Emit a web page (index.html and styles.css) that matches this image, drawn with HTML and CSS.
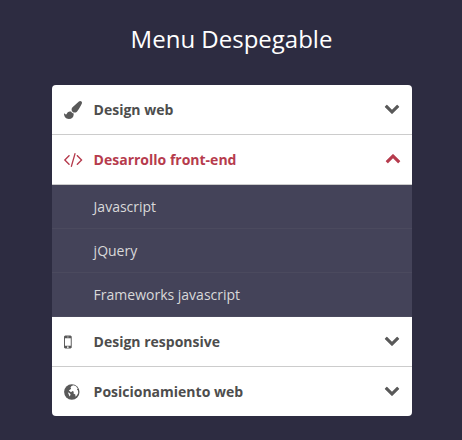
FILE: index.html
```html
<!DOCTYPE html>
<html lang="es">
<head>
<meta charset="utf-8">
<title>Menu Despegable</title>
<link rel="stylesheet" href="styles.css">
</head>
<body>
<h1>Menu Despegable</h1>
<svg class="defs" width="0" height="0"><defs>
<symbol id="chevron" viewBox="0 0 1792 1792"><path d="M1683 808l-742 741q-19 19-45 19t-45-19l-742-741q-19-19-19-45.500t19-45.500l166-165q19-19 45-19t45 19l531 531 531-531q19-19 45-19t45 19l166 165q19 19 19 45.500t-19 45.500z"/></symbol>
</defs></svg>
<ul class="accordion">
  <li>
    <div class="link"><span class="icon"><svg width="18" height="18" viewBox="0 0 1792 1792"><path d="M1615 0q70 0 122.500 46.500t52.500 116.500q0 63-45 151-332 629-465 752-97 91-218 91-126 0-216.500-92.500t-90.500-219.500q0-128 92-212l638-579q59-54 130-54zm-909 1034q39 76 106.500 130t150.500 76l1 71q4 213-129.500 347t-348.500 134q-123 0-218-46.500t-152.500-127.500-86.500-183-29-220q7 5 41 30t62 44.500 59 36.500 46 17q41 0 55-37 25-66 57.500-112.500t69.500-76 88-47.500 103-25.500 125-10.500z"/></svg></span><span class="label">Design web</span><svg class="chevron" width="16" height="16"><use href="#chevron"/></svg></div>
  </li>
  <li class="open">
    <div class="link"><span class="icon"><svg width="19" height="18" viewBox="-19 64 1891 1792"><path d="M553 1399l-50 50q-10 10-23 10t-23-10l-466-466q-10-10-10-23t10-23l466-466q10-10 23-10t23 10l50 50q10 10 10 23t-10 23l-393 393 393 393q10 10 10 23t-10 23zm591-1067l-373 1291q-4 13-15.500 19.500t-23.500 2.500l-62-17q-13-4-19.500-15.500t-2.500-24.500l373-1291q4-13 15.500-19.500t23.500-2.500l62 17q13 4 19.500 15.500t2.500 24.500zm657 651l-466 466q-10 10-23 10t-23-10l-50-50q-10-10-10-23t10-23l393-393-393-393q-10-10-10-23t10-23l50-50q10-10 23-10t23 10l466 466q10 10 10 23t-10 23z"/></svg></span><span class="label">Desarrollo front-end</span><svg class="chevron" width="16" height="16"><use href="#chevron"/></svg></div>
    <ul class="submenu">
      <li>Javascript</li>
      <li>jQuery</li>
      <li>Frameworks javascript</li>
    </ul>
  </li>
  <li>
    <div class="link"><span class="icon"><svg width="8" height="18" viewBox="512 0 796 1792"><path d="M976 1408q0-33-23.500-56.500t-56.500-23.500-56.500 23.500-23.500 56.500 23.500 56.500 56.500 23.500 56.500-23.500 23.500-56.500zm208-160v-704q0-13-9.500-22.500t-22.500-9.500h-512q-13 0-22.500 9.500t-9.500 22.500v704q0 13 9.500 22.500t22.500 9.500h512q13 0 22.500-9.500t9.500-22.500zm-192-848q0-16-16-16h-160q-16 0-16 16t16 16h160q16 0 16-16zm288-16v1024q0 52-38 90t-90 38h-512q-52 0-90-38t-38-90v-1024q0-52 38-90t90-38h512q52 0 90 38t38 90z"/></svg></span><span class="label">Design responsive</span><svg class="chevron" width="16" height="16"><use href="#chevron"/></svg></div>
  </li>
  <li>
    <div class="link"><span class="icon"><svg width="16" height="18" viewBox="0 0 16 18"><circle cx="7.800" cy="9" r="7.700"/><path class="land" d="M7.500 3L9.500 2.300l2.500 1 1.800 2.500-1 .8 1.200.9.200 2.500-1.200 2.300-1.500 1.500-.2-2.300-1.800-1L9.800 8.800 8.500 8 7 9.200 5.800 8.200 4.800 7.500 7.200 5.800 6.500 4.500zM3.800 9.200l2.200 1.300.6 1.300-1 1.700z"/></svg></span><span class="label">Posicionamiento web</span><svg class="chevron" width="16" height="16"><use href="#chevron"/></svg></div>
  </li>
</ul>
</body>
</html>
```
FILE: styles.css
```css
* {
  margin: 0;
  padding: 0;
  box-sizing: border-box;
}
body {
  background: #2d2c41;
  font-family: "Open Sans", sans-serif;
  padding-top: 22px;
}
h1 {
  padding-left: 1px;
  color: #fff;
  font-size: 24px;
  font-weight: 400;
  line-height: 33px;
  text-align: center;
}
ul {
  list-style: none;
}
.defs {
  display: block;
}
.accordion {
  width: 360px;
  margin: 30px auto 0 52px;
  background: #fff;
  border-radius: 4px;
  overflow: hidden;
}
.link {
  display: flex;
  align-items: center;
  height: 50px;
  padding: 0 12px 0 11.6px;
  border-bottom: 1px solid #ccc;
  color: #4d4d4d;
  font-size: 14px;
  font-weight: 700;
}
.accordion > li:last-child .link {
  height: 49px;
  border-bottom: 0;
}
.icon {
  display: flex;
  width: 30px;
  color: #595959;
}
.label {
  flex: 1;
}
svg {
  fill: currentColor;
}
.land {
  fill: #fff;
}
.chevron {
  margin-bottom: 3px;
  color: #595959;
}
.open .link,
.open .icon,
.open .chevron {
  color: #b63b4d;
}
.open .chevron {
  margin: 0 -1px 0 1px;
  transform: rotate(180deg);
}
.submenu {
  background: #444359;
  color: #d9d9d9;
  font-size: 14px;
}
.submenu li {
  height: 44px;
  padding-left: 41.6px;
  line-height: 43px;
  border-bottom: 1px solid #4b4a5e;
}
```
